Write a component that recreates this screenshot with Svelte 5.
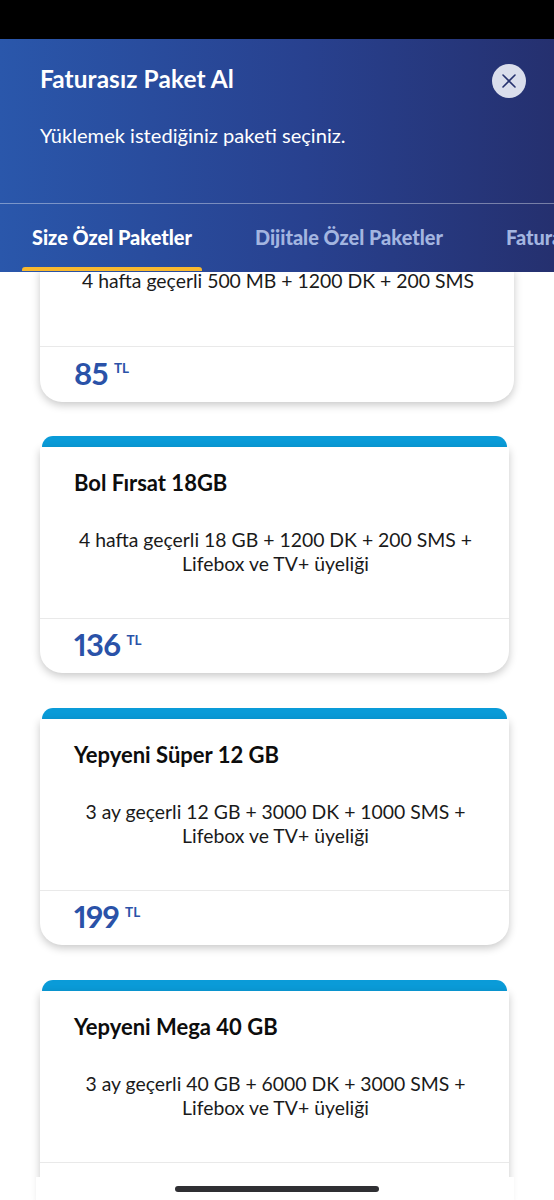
<script>
  const packages = [
    { desc: ['4 hafta geçerli 500 MB + 1200 DK + 200 SMS'], price: 85, cut: true },
    { title: 'Bol Fırsat 18GB', desc: ['4 hafta geçerli 18 GB + 1200 DK + 200 SMS +', 'Lifebox ve TV+ üyeliği'], price: 136 },
    { title: 'Yepyeni Süper 12 GB', desc: ['3 ay geçerli 12 GB + 3000 DK + 1000 SMS +', 'Lifebox ve TV+ üyeliği'], price: 199 },
    { title: 'Yepyeni Mega 40 GB', desc: ['3 ay geçerli 40 GB + 6000 DK + 3000 SMS +', 'Lifebox ve TV+ üyeliği'], price: 399 }
  ];
  const tabs = ['Size Özel Paketler', 'Dijitale Özel Paketler', 'Faturasız Paketler'];
</script>

<div class="page">
  <div class="status"></div>
  <header class="head">
    <div class="top">
      <div class="title-row">
        <h1>Faturasız Paket Al</h1>
        <button class="close" aria-label="Kapat">
          <svg viewBox="0 0 16 16" width="16" height="16"><path d="M2 2 14 14M14 2 2 14" fill="none" stroke="#26326f" stroke-width="1.6" stroke-linecap="round"/></svg>
        </button>
      </div>
      <p class="sub">Yüklemek istediğiniz paketi seçiniz.</p>
    </div>
    <nav class="tabs">
      {#each tabs as tab, i}
        <div class="tab" class:active={i === 0}>{tab}</div>
      {/each}
    </nav>
  </header>

  <main class="list">
    {#each packages as p}
      <article class="pack" class:cut={p.cut}>
        {#if !p.cut}<div class="band"></div>{/if}
        <div class="card">
          <div class="body">
            {#if p.title}<h2>{p.title}</h2>{/if}
            <p class="desc">{#each p.desc as line}<span>{line}</span>{/each}</p>
          </div>
          <div class="foot"><strong>{p.price}</strong><small>TL</small></div>
        </div>
      </article>
    {/each}
  </main>

  <div class="home"><i></i></div>
</div>

<style>
  :global(body) { margin: 0; background: #fff; }
  .page {
    position: relative;
    width: 554px;
    height: 1200px;
    overflow: hidden;
    display: flex;
    flex-direction: column;
    background: #fff;
    font-family: Lato, "Noto Sans", sans-serif;
    color: #111;
  }
  .status { height: 39px; background: #000; flex: none; }
  .head {
    flex: none;
    height: 233px;
    display: flex;
    flex-direction: column;
    background: linear-gradient(90deg, #2a57ab 0%, #28418f 55%, #25306f 100%);
    color: #fff;
    position: relative;
    z-index: 2;
  }
  .top { height: 165px; box-sizing: border-box; padding: 22px 28px 0 40px; border-bottom: 1px solid rgba(255,255,255,.38); }
  .title-row { display: flex; justify-content: space-between; align-items: flex-start; }
  h1 { margin: 0; font-size: 24.4px; line-height: 36px; font-weight: 700; letter-spacing: .1px; }
  .close {
    width: 34px; height: 34px; margin-top: 3px; padding: 0; border: 0; border-radius: 50%;
    background: #dadeec; display: flex; align-items: center; justify-content: center;
  }
  .sub { margin: 23px 0 0; font-size: 20.1px; line-height: 28px; font-weight: 400; }
  .tabs { flex: 1; display: flex; gap: 43px; padding-left: 22px; overflow: hidden; }
  .tab {
    flex: none; padding: 0 10px; line-height: 67px; height: 67px; box-sizing: border-box;
    font-size: 19.9px; font-weight: 900; color: #a3b5e0; white-space: nowrap; position: relative;
  }
  .tab.active { color: #fff; }
  .tab.active::after {
    content: ""; position: absolute; left: 0; right: 0; bottom: 0; height: 4px;
    background: #f9b92e; border-radius: 3px 3px 0 0;
  }
  .list { flex: 1; min-height: 0; overflow: hidden; padding-left: 40px; display: flex; flex-direction: column; gap: 35px; margin-top: -3px; }
  .pack { flex: none; width: 469px; }
  .pack.cut { width: 474px; margin-bottom: -1px; }
  .band { height: 11px; margin: 0 2px; background: #0a9bd8; border-radius: 13px 13px 0 0; }
  .card { position: relative; background: #fff; border-radius: 2px 2px 22px 22px; box-shadow: 0 3px 9px rgba(0,0,0,.22); }
  .cut .card { border-radius: 0 0 22px 22px; }
  .body { height: 172px; box-sizing: border-box; padding: 20px 34px 0; border-bottom: 1px solid #e9e9e9; }
  .cut .body { height: 78px; padding-top: 0; }
  h2 { margin: 0 0 29px; font-size: 22px; line-height: 32px; font-weight: 700; color: #0d0d0d; }
  .desc { margin: 0 -15px 0 -13px; font-size: 19.4px; line-height: 24px; text-align: center; color: #1a1a1a; }
  .desc span { display: block; white-space: nowrap; }
  .foot { height: 54px; box-sizing: border-box; padding: 0 0 3px 34px; display: flex; align-items: center; gap: 6px; color: #2a52a8; }
  .cut .foot { height: 55px; }
  .foot strong { font-size: 31px; line-height: 1; font-weight: 700; font-variant-numeric: proportional-nums; letter-spacing: -.7px; }
  .foot small { font-size: 13.5px; font-weight: 700; align-self: flex-start; margin-top: 13px; }
  .home { position: absolute; left: 36px; right: 40px; bottom: 0; height: 23px; background: #fff; z-index: 3; }
  .home i { position: absolute; left: 139px; top: 9px; width: 204px; height: 6px; border-radius: 3px; background: #2f2f33; }
</style>
